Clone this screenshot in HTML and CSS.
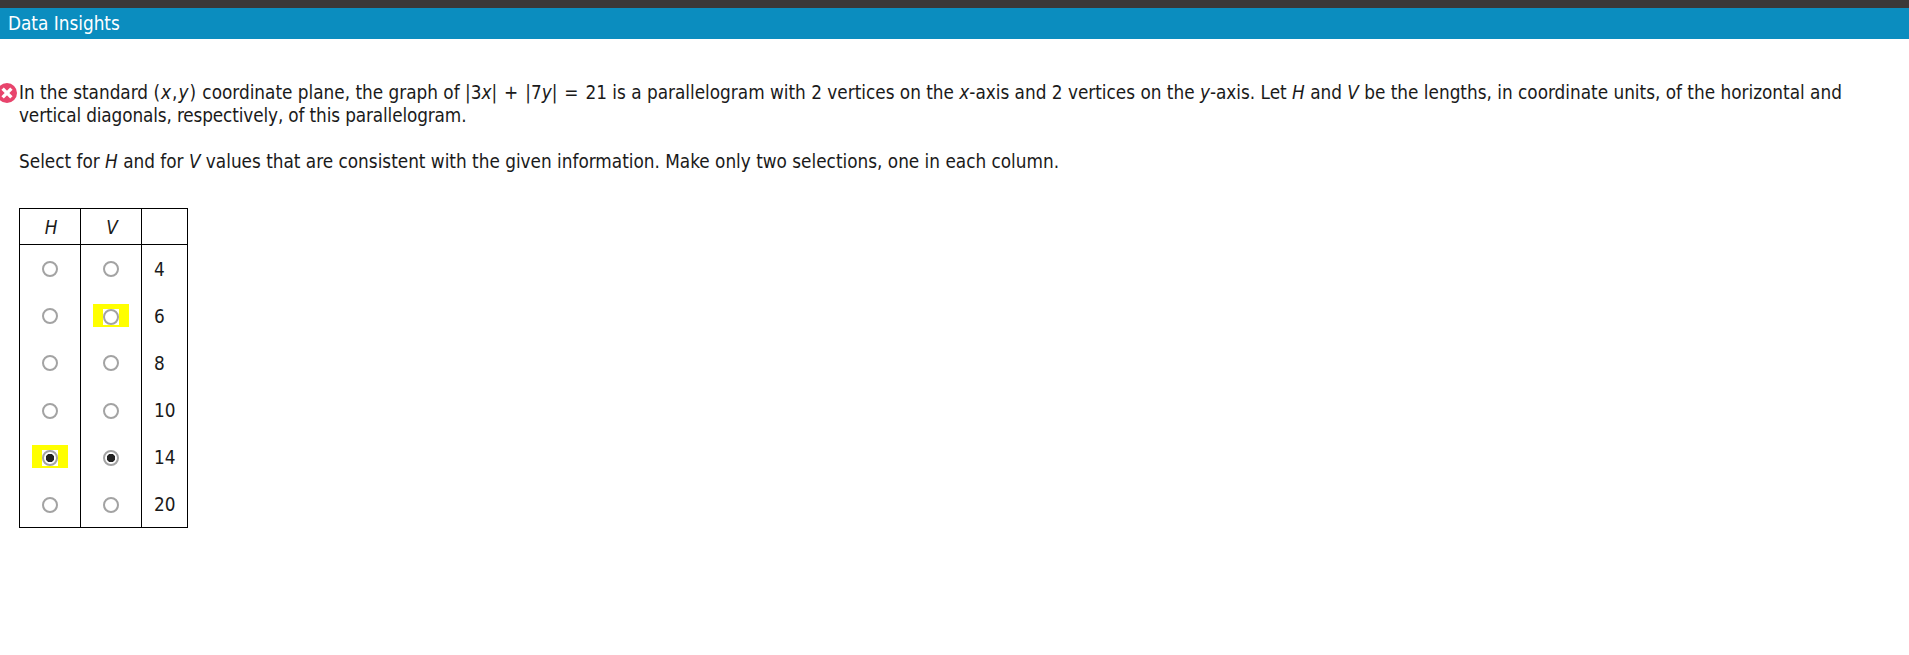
FILE: index.html
```html
<!doctype html>
<html>

<head>
    <meta charset="UTF-8" />
    <title>Data Insights</title>
    <link rel="stylesheet" href="styles.css">
</head>

<body>
    <div class="topbar"></div>
    <h1 class="section-title">Data Insights</h1>
    <div class="question">
        <svg class="wrong-icon" width="18" height="22" viewBox="0 0 18 22">
            <circle cx="7" cy="11" r="10" fill="#e8446c" />
            <path d="M2.6 6.6 L11.4 15.4 M11.4 6.6 L2.6 15.4" stroke="#fff" stroke-width="3.4" />
        </svg>
        <p class="stem">In the standard <span class="coord">(<i>x</i>,<i>y</i>)</span> coordinate plane, the graph of <span class="eq">|3<i>x</i>| + |7<i>y</i>| = 21</span> is a parallelogram with 2 vertices on the <i>x</i>-axis and 2 vertices on the <i>y</i>-axis. Let <i>H</i> and <i>V</i> be the lengths, in coordinate units, of the horizontal and <span class="tail">vertical diagonals, respectively, of this parallelogram.</span></p>
        <p class="stem stem--second">Select for <i>H</i> and for <i>V</i> values that are consistent with the given information. Make only two selections, one in each column.</p>
        <table class="answers">
            <thead>
                <tr>
                    <th><i>H</i></th>
                    <th><i>V</i></th>
                    <th></th>
                </tr>
            </thead>
            <tbody>
                <tr>
                    <td class="pick"><span class="radio"></span></td>
                    <td class="pick"><span class="radio"></span></td>
                    <td class="value">4</td>
                </tr>
                <tr>
                    <td class="pick"><span class="radio"></span></td>
                    <td class="pick"><span class="mark"><span class="mark__box"><span class="radio"></span></span></span></td>
                    <td class="value">6</td>
                </tr>
                <tr>
                    <td class="pick"><span class="radio"></span></td>
                    <td class="pick"><span class="radio"></span></td>
                    <td class="value">8</td>
                </tr>
                <tr>
                    <td class="pick"><span class="radio"></span></td>
                    <td class="pick"><span class="radio"></span></td>
                    <td class="value">10</td>
                </tr>
                <tr>
                    <td class="pick"><span class="mark"><span class="mark__box"><span class="radio radio--on"></span></span></span></td>
                    <td class="pick"><span class="radio radio--on"></span></td>
                    <td class="value">14</td>
                </tr>
                <tr>
                    <td class="pick"><span class="radio"></span></td>
                    <td class="pick"><span class="radio"></span></td>
                    <td class="value">20</td>
                </tr>
            </tbody>
        </table>
    </div>
</body>

</html>
```

FILE: styles.css
```css
* {
    margin: 0;
    padding: 0;
    box-sizing: border-box;
}

body {
    background-color: #fff;
    color: #1a1a1a;
    font-family: "DejaVu Sans", sans-serif;
    font-size: 18.8px;
    font-stretch: condensed;
}

.topbar {
    height: 8px;
    background-color: #3b3838;
}

.section-title {
    height: 31px;
    background-color: #0b8dbf;
    color: #fff;
    font-size: 18.8px;
    font-weight: normal;
    line-height: 32px;
    padding-left: 8px;
}

.question {
    position: relative;
    padding: 42px 0 0 19px;
}

.wrong-icon {
    position: absolute;
    left: 0;
    top: 43px;
}

.stem {
    line-height: 23px;
    max-width: 1850px;
}

.stem--second {
    margin-top: 23px;
}

.coord {
    letter-spacing: 1px;
}

.eq {
    word-spacing: 1.6px;
}

.tail {
    letter-spacing: -0.13px;
}

.answers {
    border-collapse: collapse;
    margin-top: 35px;
    table-layout: fixed;
    width: 168px;
}

.answers th,
.answers td {
    border: 1px solid #000;
    border-top: 0;
    border-bottom: 0;
}

.answers thead tr {
    border-top: 1px solid #000;
    border-bottom: 1px solid #000;
}

.answers tbody tr:last-child {
    border-bottom: 1px solid #000;
}

.answers th {
    height: 36px;
    font-weight: normal;
    padding: 2px 0 0 2px;
    width: 61px;
}

.answers th:last-child {
    width: 46px;
}

.answers td {
    height: 47.2px;
}

.pick {
    text-align: center;
}

.value {
    padding: 2px 0 0 12px;
}

.radio {
    display: inline-block;
    width: 16px;
    height: 16px;
    border: 2px solid #a3a3a3;
    border-radius: 50%;
    background-color: #fff;
    vertical-align: middle;
}

.radio--on {
    background: radial-gradient(circle, #222 0 4px, #fff 4.5px);
}

.mark {
    display: inline-flex;
    justify-content: center;
    align-items: flex-end;
    width: 36px;
    height: 23px;
    padding-bottom: 2px;
    background-color: #ff0;
    vertical-align: middle;
}

.mark__box {
    display: flex;
    background-color: #fff;
}
```
